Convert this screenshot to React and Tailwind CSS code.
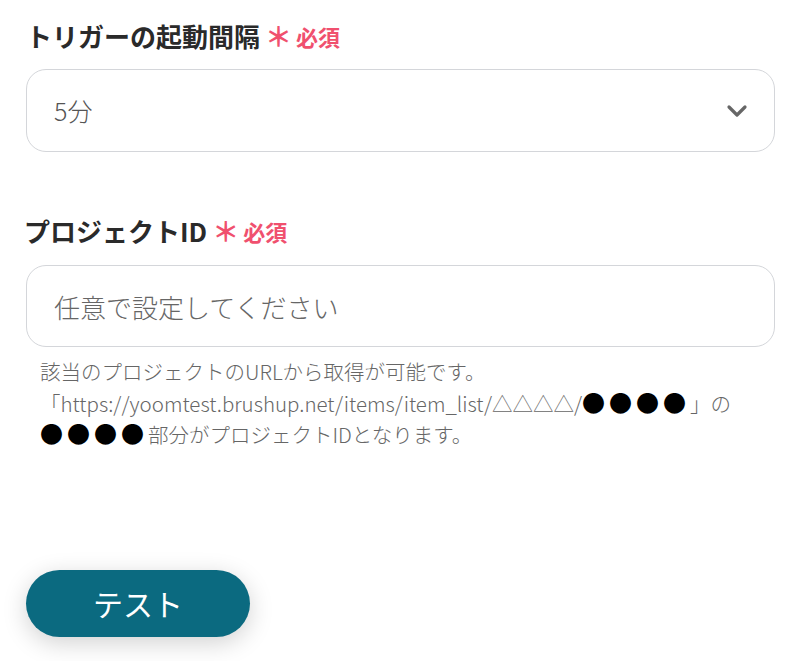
import React from 'react';

const font = { fontFamily: '"Noto Sans CJK JP", "Noto Sans", sans-serif' };

const Label = ({ children }) => (
  <div className="flex items-center">
    <span className="text-[26px] font-bold text-[#2a2a2a] leading-none">{children}</span>
    <span className="ml-[5px] text-[27px] font-bold text-[#f0506e] leading-none">＊</span>
    <span className="ml-[4px] text-[22px] font-bold text-[#f0506e] leading-none">必須</span>
  </div>
);

const Dots = () => (
  <span className="text-[23px] text-black tracking-[4px] leading-none">●●●●</span>
);

export default function App() {
  return (
    <div className="bg-white w-[797px] h-[661px] overflow-hidden" style={font}>
      <div className="pl-[26px] pr-[22px] pt-[22px]">
        <Label>トリガーの起動間隔</Label>
        <div className="mt-[20px] h-[83px] rounded-[20px] border border-[#d4d6da] flex items-center justify-between pl-[27px] pr-[26px]">
          <span className="text-[25px] text-[#555] font-light">5分</span>
          <svg width="22" height="14" viewBox="0 0 22 14" fill="none">
            <path d="M3 3l8 8 8-8" stroke="#666" strokeWidth="3.2" strokeLinecap="round" strokeLinejoin="round" />
          </svg>
        </div>

        <div className="mt-[65px] -ml-[2px]">
          <Label>プロジェクトID</Label>
        </div>
        <div className="mt-[21px] h-[82px] rounded-[20px] border border-[#d4d6da] flex items-center pl-[27px]">
          <span className="text-[26px] text-[#666] font-light">任意で設定してください</span>
        </div>
        <div className="mt-[9px] pl-[14px] text-[20.5px] leading-[31.5px] text-[#666] font-light">
          <p>該当のプロジェクトのURLから取得が可能です。</p>
          <p>「https://yoomtest.brushup.net/items/item_list/△△△△/<Dots />」の</p>
          <p><Dots />部分がプロジェクトIDとなります。</p>
        </div>

        <button className="mt-[119px] w-[224px] h-[67px] rounded-full bg-[#0b6a80] text-white text-[30px] shadow-[0_6px_24px_rgba(0,0,0,0.18)]">
          テスト
        </button>
      </div>
    </div>
  );
}
